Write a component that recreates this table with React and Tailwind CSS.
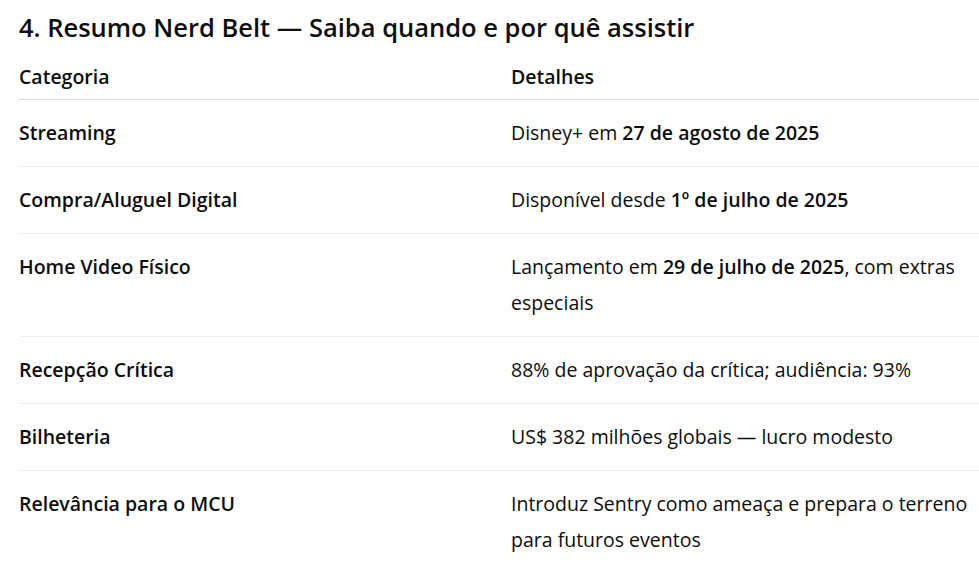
const rows = [
  { cat: 'Streaming', det: <>Disney+ em <strong className="font-semibold">27 de agosto de 2025</strong></> },
  { cat: 'Compra/Aluguel Digital', det: <>Disponível desde <strong className="font-semibold">1º de julho de 2025</strong></> },
  { cat: 'Home Video Físico', det: <>Lançamento em <strong className="font-semibold">29 de julho de 2025</strong>, com extras especiais</> },
  { cat: 'Recepção Crítica', det: '88% de aprovação da crítica; audiência: 93%' },
  { cat: 'Bilheteria', det: 'US$ 382 milhões globais — lucro modesto' },
  { cat: 'Relevância para o MCU', det: 'Introduz Sentry como ameaça e prepara o terreno para futuros eventos' },
]

export default function App() {
  return (
    <div className="min-h-screen overflow-hidden bg-white pl-[19px] text-[#0d0d0d]" style={{ fontFamily: '"Open Sans", "Noto Sans", sans-serif' }}>
      <h2 className="pt-[10px] text-[25.5px] font-semibold leading-[34px]">
        4. Resumo Nerd Belt — Saiba quando e por quê assistir
      </h2>
      <table className="mt-[15px] w-[960px] table-fixed border-collapse text-[19.5px]">
        <thead>
          <tr className="border-b border-[#d9d9d9]">
            <th className="w-[492px] pb-[4px] text-left font-semibold leading-[36px]">Categoria</th>
            <th className="pb-[4px] text-left font-semibold leading-[36px]">Detalhes</th>
          </tr>
        </thead>
        <tbody>
          {rows.map((r, i) => (
            <tr key={i} className={i < rows.length - 1 ? 'border-b border-[#ededed]' : ''}>
              <td className="py-[15px] align-top font-semibold leading-[36px]">{r.cat}</td>
              <td className="py-[15px] align-top leading-[36px]">{r.det}</td>
            </tr>
          ))}
        </tbody>
      </table>
    </div>
  )
}
